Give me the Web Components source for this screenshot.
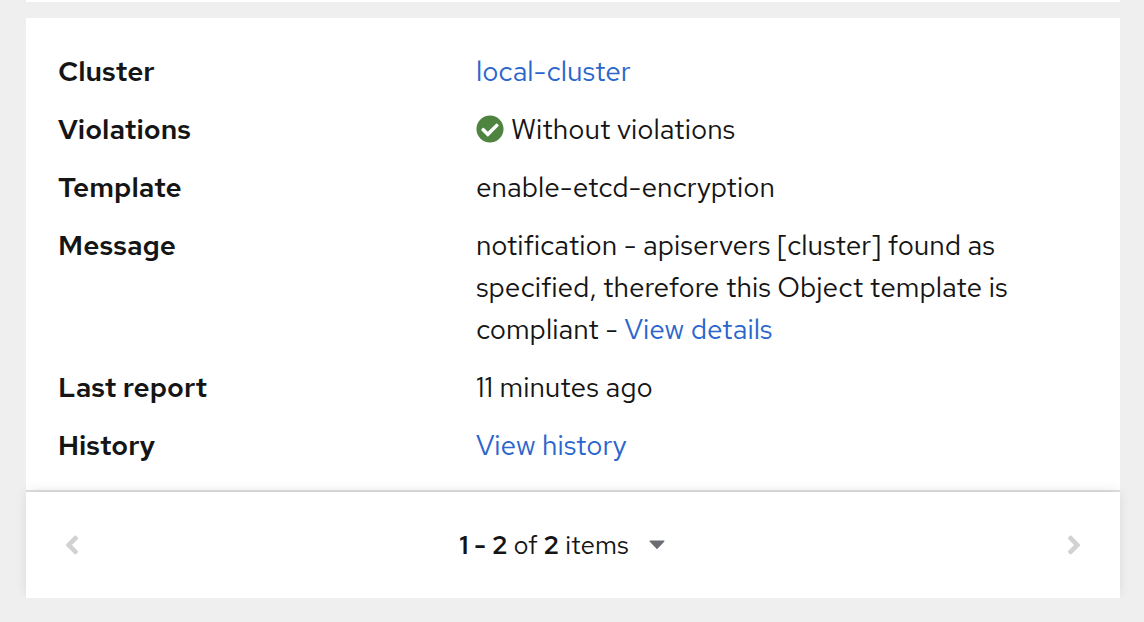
<!DOCTYPE html>
<html lang="en">
<head>
<meta charset="utf-8">
<meta name="viewport" content="width=device-width, initial-scale=1">
<title>Policy status</title>
<style>
  html { background: #efefef; }
  body {
    margin: 0;
    color: #151515;
    font-family: "Red Hat Text", Inter, "Noto Sans", sans-serif;
    font-size: 28px;
    line-height: 42px;
  }
</style>
</head>
<body>
<status-page>
  <status-card>
    <status-row label="Cluster"><text-link href="#cluster">local-cluster</text-link></status-row>
    <status-row label="Violations"><status-ok>Without violations</status-ok></status-row>
    <status-row label="Template">enable-etcd-encryption</status-row>
    <status-row label="Message">notification - apiservers [cluster] found as specified, therefore this Object template is compliant - <text-link href="#details">View details</text-link></status-row>
    <status-row label="Last report">11 minutes ago</status-row>
    <status-row label="History"><text-link href="#history">View history</text-link></status-row>
  </status-card>
  <page-bar first="1" last="2" total="2"></page-bar>
</status-page>
<script>
class BaseElement extends HTMLElement {
  constructor() {
    super();
    this.attachShadow({ mode: "open" });
  }
  connectedCallback() {
    this.shadowRoot.innerHTML = this.render();
  }
}

customElements.define("status-page", class extends BaseElement {
  render() {
    return `
      <style>
        :host { display: block; padding: 0 24px 24px 26px; }
        .previous { height: 2px; margin-bottom: 16px; background: #fff; }
      </style>
      <div class="previous"></div>
      <main><slot></slot></main>`;
  }
});

customElements.define("status-card", class extends BaseElement {
  render() {
    return `
      <style>
        :host { display: block; background: #fff; padding: 32px 32px 26px; }
        div { display: grid; gap: 16px; }
      </style>
      <div><slot></slot></div>`;
  }
});

customElements.define("status-row", class extends BaseElement {
  render() {
    return `
      <style>
        :host { display: block; }
        dl { display: grid; grid-template-columns: 29fr 46fr; column-gap: 32px; margin: 0; }
        dt { font-weight: 570; }
        dd { margin: 0; min-width: 0; }
      </style>
      <dl><dt>${this.getAttribute("label")}</dt><dd><slot></slot></dd></dl>`;
  }
});

customElements.define("text-link", class extends BaseElement {
  render() {
    return `
      <style>
        :host { display: inline; }
        a { color: #2b66cc; text-decoration: none; }
        a:hover { text-decoration: underline; }
      </style>
      <a href="${this.getAttribute("href")}"><slot></slot></a>`;
  }
});

customElements.define("status-ok", class extends BaseElement {
  render() {
    return `
      <style>
        :host { display: flex; align-items: center; gap: 7px; }
        svg { flex: none; width: 28px; height: 28px; }
      </style>
      <svg viewBox="0 0 512 512" aria-hidden="true"><path fill="#4f8440" d="M504 256c0 136.967-111.033 248-248 248S8 392.967 8 256 119.033 8 256 8s248 111.033 248 248zM227.314 387.314l184-184c6.248-6.248 6.248-16.379 0-22.627l-22.627-22.627c-6.248-6.249-16.379-6.249-22.628 0L216 308.118l-70.059-70.059c-6.248-6.248-16.379-6.248-22.628 0l-22.627 22.627c-6.248 6.248-6.248 16.379 0 22.627l104 104c6.249 6.249 16.379 6.249 22.628.001z"/></svg>
      <span><slot></slot></span>`;
  }
});

customElements.define("page-bar", class extends BaseElement {
  render() {
    const get = name => this.getAttribute(name);
    return `
      <style>
        :host {
          display: block;
          position: relative;
          background: #fff;
          box-shadow: 0 -2px 0 0 rgba(3, 3, 3, .12), 0 -2px 12px -2px rgba(3, 3, 3, .12);
          clip-path: polygon(-16px -16px, calc(100% + 16px) -16px, calc(100% + 16px) 100%, -16px 100%);
        }
        nav { display: flex; align-items: center; justify-content: space-between; padding: 32px; }
        button {
          display: flex;
          align-items: center;
          margin: 0;
          padding: 0;
          border: 0;
          background: none;
          color: inherit;
          font: inherit;
          font-size: 26px;
          line-height: 42px;
        }
        .step { width: 28px; height: 42px; justify-content: center; color: #d2d2d2; }
        .items { gap: 20px; margin-right: 22px; }
        .arrow { width: 16px; height: 28px; color: #6a6e73; }
        b { font-weight: 600; }
        .chevron { width: 16px; height: 30px; }
      </style>
      <nav aria-label="Pagination">
        <button class="step" type="button" disabled aria-label="Previous">
          <svg class="chevron" viewBox="0 0 256 512" aria-hidden="true"><path fill="currentColor" d="M31.700 239l136-136c9.400-9.400 24.600-9.400 33.900 0l22.600 22.600c9.400 9.400 9.400 24.600 0 33.900L127.900 256l96.400 96.400c9.400 9.400 9.400 24.600 0 33.900L201.700 409c-9.400 9.400-24.600 9.400-33.900 0l-136-136c-9.500-9.400-9.500-24.600-.1-34z"/></svg>
        </button>
        <button class="items" type="button" aria-haspopup="true">
          <span><b>${get("first")} - ${get("last")}</b> of <b>${get("total")}</b> items</span>
          <svg class="arrow" viewBox="0 0 16 28" aria-hidden="true"><path fill="currentColor" d="M.8 9.500H15.200Q15.800 9.900 15.200 10.700L8.500 17.800Q8 18.200 7.500 17.800L.8 10.700Q.2 9.900 .8 9.500Z"/></svg>
        </button>
        <button class="step" type="button" disabled aria-label="Next">
          <svg class="chevron" viewBox="0 0 256 512" aria-hidden="true"><path fill="currentColor" d="M224.300 273l-136 136c-9.400 9.400-24.600 9.400-33.900 0l-22.600-22.600c-9.400-9.400-9.400-24.600 0-33.900l96.400-96.400-96.400-96.400c-9.400-9.400-9.400-24.600 0-33.900L54.300 103c9.400-9.400 24.600-9.400 33.900 0l136 136c9.500 9.400 9.500 24.600.1 34z"/></svg>
        </button>
      </nav>`;
  }
});
</script>
</body>
</html>
